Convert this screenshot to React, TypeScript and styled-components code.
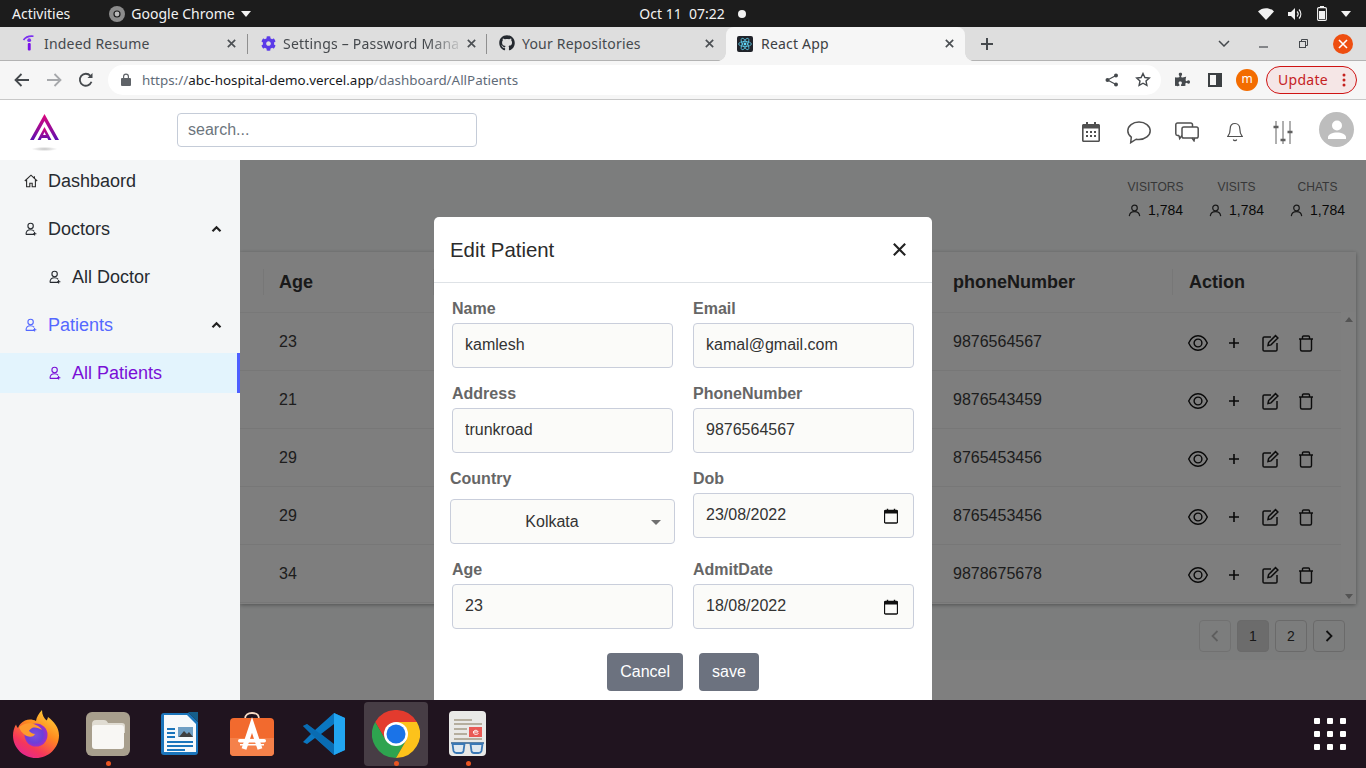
import React from "react";
import styled, { createGlobalStyle } from "styled-components";
import { FaCog, FaGithub, FaPuzzlePiece } from "react-icons/fa";

const Global = createGlobalStyle`
  html, body { margin: 0; padding: 0; height: 768px; overflow: hidden; background: #fff; }
  * { box-sizing: border-box; }
  body { font-family: "Liberation Sans", Arial, sans-serif; }
`;

const ui = `"Noto Sans", "Open Sans", sans-serif`;

const Screen = styled.div`
  width: 1366px;
  height: 768px;
  display: flex;
  flex-direction: column;
  overflow: hidden;
`;

/* GNOME top bar */
const TopBar = styled.div`
  height: 27px;
  background: #1c1c1c;
  color: #f2f2f2;
  font-family: ${ui};
  font-size: 14px;
  display: grid;
  grid-template-columns: 1fr auto 1fr;
  align-items: center;
  padding: 0 12px;
`;
const TopLeft = styled.div`
  display: flex;
  align-items: center;
`;
const AppMenu = styled.div`
  display: flex;
  align-items: center;
  gap: 6px;
  margin-left: 39px;
`;
const TopClock = styled.div`
  display: flex;
  align-items: center;
  gap: 13px;
  padding-left: 19px;
`;
const TopRight = styled.div`
  display: flex;
  justify-content: flex-end;
  align-items: center;
  gap: 14px;
  padding-right: 3px;
`;

/* Tab strip */
const TabStrip = styled.div`
  height: 34px;
  background: #dedede;
  border-bottom: 1px solid #b3b3b3;
  display: flex;
  align-items: flex-start;
  padding-left: 8px;
  font-family: ${ui};
  font-size: 14px;
  letter-spacing: 0.2px;
  color: #45494d;
`;
const Tab = styled.div<{ $active?: boolean; $sep?: boolean }>`
  position: relative;
  width: 239px;
  height: 34px;
  display: flex;
  align-items: center;
  padding: 0 8px 2px 13px;
  gap: 7px;
  ${(p) => p.$active && `
    background: #f6f6f6;
    height: 35px;
    margin-left: 1px;
    padding-left: 11px;
    gap: 8px;
    border-radius: 8px 8px 0 0;
    color: #3c4043;
    z-index: 1;
    &::before, &::after {
      content: "";
      position: absolute;
      bottom: 1px;
      width: 8px;
      height: 8px;
    }
    &::before {
      left: -8px;
      background: radial-gradient(circle at 0 0, transparent 7.5px, #f6f6f6 8px);
    }
    &::after {
      right: -8px;
      background: radial-gradient(circle at 100% 0, transparent 7.5px, #f6f6f6 8px);
    }
  `}
  ${(p) => p.$sep && `
    &::after {
      content: "";
      position: absolute;
      right: -1px;
      top: 7px;
      height: 20px;
      width: 1px;
      background: #8f8f8f;
    }
  `}
`;
const TabTitle = styled.span<{ $fade?: boolean }>`
  white-space: nowrap;
  ${(p) => p.$fade && `
    -webkit-mask-image: linear-gradient(90deg, #000 82%, rgba(0, 0, 0, 0.15) 100%);
    mask-image: linear-gradient(90deg, #000 82%, rgba(0, 0, 0, 0.15) 100%);
  `}
`;
const TabIconBox = styled.span`
  width: 16px;
  height: 16px;
  display: flex;
  align-items: center;
  justify-content: center;
  flex: none;
`;
const TabClose = styled.span`
  display: flex;
  margin: 0 2px 0 auto;
`;
const StripRight = styled.div`
  flex: 1;
  display: flex;
  align-items: center;
  height: 33px;
  position: relative;
`;
const NewTab = styled.span`
  margin-left: 15px;
  display: flex;
`;
const WindowControls = styled.div`
  margin-left: auto;
  display: flex;
  align-items: center;
  padding-right: 3px;
`;
const ControlSlot = styled.span<{ $w: number }>`
  width: ${(p) => p.$w}px;
  display: flex;
  justify-content: center;
  align-items: center;
`;
const CloseCircle = styled.span`
  width: 20px;
  height: 20px;
  border-radius: 50%;
  background: #ee4e10;
  display: flex;
  align-items: center;
  justify-content: center;
`;

/* Chrome toolbar */
const ToolBar = styled.div`
  height: 39px;
  background: #f6f6f6;
  border-bottom: 1px solid #c8c8c8;
  display: flex;
  align-items: center;
  padding: 0 9px 1px 0;
`;
const NavButtons = styled.div`
  display: flex;
  align-items: center;
  width: 108px;
  padding-left: 14px;
  gap: 16px;
`;
const Omnibox = styled.div`
  width: 1053px;
  height: 30px;
  background: #fff;
  border-radius: 15px;
  display: flex;
  align-items: center;
  padding: 0 10px 0 12px;
  font-family: ${ui};
  font-size: 13.4px;
  color: #5f6b78;
`;
const Url = styled.span`
  margin-left: 10px;
  flex: 1;
  white-space: nowrap;
`;
const UrlHost = styled.span`
  color: #16191c;
`;
const OmniIcons = styled.div`
  display: flex;
  align-items: center;
  gap: 16px;
`;
const ToolIcons = styled.div`
  display: flex;
  align-items: center;
  margin-left: 14px;
  gap: 18px;
`;
const ProfileBadge = styled.span`
  width: 22px;
  height: 22px;
  margin-left: 14px;
  border-radius: 50%;
  background: #f36c00;
  color: #fff;
  font-family: ${ui};
  font-size: 12px;
  display: flex;
  align-items: center;
  justify-content: center;
  padding-bottom: 2px;
`;
const UpdatePill = styled.div`
  width: 91px;
  height: 28px;
  margin-left: 8px;
  border: 1px solid #cf1414;
  border-radius: 14px;
  background: #f5e6e6;
  color: #c5221f;
  font-family: ${ui};
  font-size: 14px;
  letter-spacing: 0.3px;
  display: flex;
  align-items: center;
  justify-content: space-between;
  padding: 0 10px 0 11px;
`;

/* App header */
const AppHeader = styled.header`
  height: 60px;
  background: #fff;
  display: flex;
  align-items: center;
`;
const LogoBox = styled.div`
  width: 177px;
  height: 60px;
  display: flex;
  align-items: center;
  padding: 0 0 6px 28px;
`;
const SearchInput = styled.input`
  width: 300px;
  height: 34px;
  border: 1px solid #c5ccd8;
  border-radius: 4px;
  padding: 0 10px 1px;
  font: 16px "Liberation Sans", Arial, sans-serif;
  color: #333;
  &::placeholder { color: #6c757d; opacity: 1; }
`;
const HeaderIcons = styled.div`
  margin-left: auto;
  display: flex;
  align-items: center;
  padding-right: 12px;
`;
const HeaderIcon = styled.span`
  width: 48px;
  margin-top: 4px;
  display: flex;
  justify-content: center;
  align-items: center;
`;
const Avatar = styled.span`
  width: 35px;
  height: 35px;
  margin-left: 12px;
  margin-top: -1px;
  border-radius: 50%;
  background: #bdbdbd;
  display: flex;
  align-items: center;
  justify-content: center;
`;

/* Main */
const Main = styled.div`
  height: 540px;
  display: flex;
  overflow: hidden;
`;
const Sidebar = styled.nav`
  width: 240px;
  flex: none;
  background: #f4f6f7;
  padding-top: 1px;
  display: flex;
  flex-direction: column;
  gap: 8px;
`;
const NavItem = styled.div<{ $tone?: "blue" | "violet"; $sub?: boolean; $selected?: boolean }>`
  height: 40px;
  display: flex;
  align-items: center;
  font-size: 18px;
  color: ${(p) => (p.$tone === "blue" ? "#5468ff" : p.$tone === "violet" ? "#7a0fd6" : "#272b30")};
  padding-left: ${(p) => (p.$sub ? "48px" : "24px")};
  gap: 10px;
  padding-right: 18px;
  ${(p) => p.$selected && `
    background: #e3f4fd;
    border-right: 3px solid #4e5fff;
  `}
`;
const NavLabel = styled.span`
  flex: 1;
`;

const Content = styled.div`
  flex: 1;
  position: relative;
  background: #fff;
  overflow: hidden;
`;
const ContentInner = styled.div`
  height: 500px;
  background: #f9fbfb;
  display: flex;
  flex-direction: column;
`;
const StatsBar = styled.div`
  height: 92px;
  flex: none;
  display: flex;
  justify-content: flex-end;
  gap: 26px;
  padding: 20px 21px 0 0;
`;
const Stat = styled.div`
  width: 55px;
  display: flex;
  flex-direction: column;
  align-items: center;
  gap: 8px;
`;
const StatLabel = styled.span`
  font-size: 12px;
  line-height: 14px;
  color: #6f6f70;
  white-space: nowrap;
`;
const StatValue = styled.span`
  font-size: 14px;
  line-height: 16px;
  color: #111;
  display: flex;
  align-items: center;
  gap: 7px;
  white-space: nowrap;
`;
const TableCard = styled.div`
  margin-right: 10px;
  height: 352px;
  flex: none;
  background: #fff;
  box-shadow: 0 1px 4px rgba(0, 0, 0, 0.35);
  position: relative;
`;
const cols = "23px 170px 1fr 235px 169px";
const HeadRow = styled.div`
  height: 61px;
  display: grid;
  grid-template-columns: ${cols};
  padding-right: 15px;
  align-items: center;
  background: #fcfcfc;
  border-bottom: 1px solid #f0f0f0;
`;
const HeadCell = styled.div<{ $line?: boolean; $pad?: number }>`
  font-size: 18px;
  font-weight: 700;
  color: #333;
  padding-left: ${(p) => p.$pad ?? 16}px;
  height: 26px;
  line-height: 26px;
  ${(p) => p.$line && "border-left: 1px solid #eee;"}
`;
const BodyRows = styled.div`
  display: flex;
  flex-direction: column;
  margin-right: 15px;
`;
const Row = styled.div`
  height: 58px;
  display: grid;
  grid-template-columns: ${cols};
  align-items: center;
  background: #fcfcfc;
  border-bottom: 1px solid #eeeeee;
  font-size: 16px;
  color: #3a3a3a;
`;
const Cell = styled.div`
  padding-left: 16px;
`;
const Actions = styled.div`
  display: flex;
  gap: 16px;
  padding: 3px 0 0 16px;
`;
const ScrollTrack = styled.div`
  position: absolute;
  right: 0;
  top: 60px;
  bottom: 0;
  width: 15px;
  background: #fff;
  display: flex;
  flex-direction: column;
  justify-content: space-between;
  align-items: center;
  padding: 5px 0;
`;
const Pager = styled.div`
  display: flex;
  justify-content: flex-end;
  gap: 6px;
  margin: 16px 21px 0 0;
`;
const PageBtn = styled.div<{ $active?: boolean; $muted?: boolean }>`
  width: 32px;
  height: 32px;
  border: 1px solid ${(p) => (p.$muted ? "#e2e2e2" : "#d4d4d4")};
  border-radius: 4px;
  background: ${(p) => (p.$active ? "#d8d8d8" : "transparent")};
  color: #333;
  font-size: 14px;
  display: flex;
  align-items: center;
  justify-content: center;
`;

/* Overlay + modal */
const Scrim = styled.div`
  position: absolute;
  inset: 0;
  background: rgba(0, 0, 0, 0.5);
`;
const Modal = styled.div`
  position: absolute;
  left: 194px;
  top: 57px;
  width: 498px;
  height: 520px;
  background: #fff;
  border-radius: 5px 5px 0 0;
`;
const ModalHead = styled.div`
  height: 66px;
  border-bottom: 1px solid #dee2e6;
  display: flex;
  align-items: center;
  justify-content: space-between;
  padding: 0 24px 0 16px;
`;
const ModalTitle = styled.h2`
  margin: 0;
  padding-top: 2px;
  font-size: 20.4px;
  font-weight: 400;
  color: #2b2b2b;
`;
const ModalBody = styled.div`
  padding: 16px 18px 0;
`;
const FormGrid = styled.div`
  display: grid;
  grid-template-columns: 221px 221px;
  column-gap: 20px;
  row-gap: 16px;
`;
const Field = styled.label<{ $outset?: boolean }>`
  display: flex;
  flex-direction: column;
  ${(p) => p.$outset && "margin: 0 -2px;"}
`;
const FieldLabel = styled.span<{ $gap?: number }>`
  font-size: 16px;
  line-height: 20px;
  font-weight: 700;
  color: #666;
  margin-bottom: ${(p) => p.$gap ?? 4}px;
`;
const TextInput = styled.input`
  height: 45px;
  width: 100%;
  border: 1px solid #c9cedb;
  border-radius: 4px;
  background: #fbfbf9;
  padding: 0 12px 2px;
  font: 16px "Liberation Sans", Arial, sans-serif;
  color: #333;
`;
const SelectBox = styled.div`
  height: 45px;
  border: 1px solid #c9cedb;
  border-radius: 4px;
  background: #fbfbf9;
  display: flex;
  align-items: center;
  position: relative;
  font-size: 16px;
  color: #333;
`;
const SelectValue = styled.span`
  flex: 1;
  text-align: center;
  padding-right: 21px;
`;
const SelectCaret = styled.span`
  position: absolute;
  right: 13px;
  top: 20px;
  width: 0;
  height: 0;
  border-left: 5px solid transparent;
  border-right: 5px solid transparent;
  border-top: 5px solid #707070;
`;
const DateBox = styled.div`
  height: 45px;
  border: 1px solid #c9cedb;
  border-radius: 4px;
  background: #fbfbf9;
  display: flex;
  align-items: center;
  justify-content: space-between;
  padding: 0 15px 0 12px;
  font-size: 16px;
  color: #333;
`;
const DateText = styled.span`
  padding-bottom: 2px;
`;
const ModalActions = styled.div`
  display: flex;
  justify-content: center;
  gap: 16px;
  margin-top: 24px;
`;
const Button = styled.button`
  height: 38px;
  border: 0;
  border-radius: 4px;
  background: #6c727f;
  color: #fff;
  font: 16px "Liberation Sans", Arial, sans-serif;
  padding: 0 13px;
`;

/* Dock */
const Dock = styled.footer`
  height: 68px;
  background: #20141f;
  display: flex;
  align-items: center;
  position: relative;
`;
const DockSlot = styled.div<{ $on?: boolean; $dot?: boolean }>`
  width: 72px;
  height: 64px;
  display: flex;
  align-items: center;
  justify-content: center;
  position: relative;
  &::before {
    content: "";
    position: absolute;
    left: 4px;
    right: 4px;
    top: 0;
    bottom: 0;
    border-radius: 4px;
    background: ${(p) => (p.$on ? "#473d45" : "transparent")};
  }
  & > svg { position: relative; }
  ${(p) => p.$dot && `
    &::after {
      content: "";
      position: absolute;
      left: 34px;
      bottom: 0;
      width: 5px;
      height: 5px;
      border-radius: 50%;
      background: #e95420;
    }
  `}
`;
const AppGrid = styled.div`
  margin-left: auto;
  margin-right: 20px;
  width: 32px;
  height: 32px;
  display: grid;
  grid-template-columns: repeat(3, 6px);
  justify-content: space-between;
  align-content: space-between;
`;
const AppGridDot = styled.span`
  width: 6px;
  height: 6px;
  border-radius: 1px;
  background: #fff;
`;

/* ---------- icons ---------- */
const UserIcon = ({ c = "currentColor", s = 14, w = 1.3 }: { c?: string; s?: number; w?: number }) => (
  <svg width={s} height={s} viewBox="0 0 14 14" fill="none" stroke={c} strokeWidth={w}>
    <circle cx="7" cy="4.3" r="3" />
    <path d="M1.4 13c.3-3 2.4-4.9 5.6-4.9s5.3 1.9 5.6 4.9" />
  </svg>
);
const NavUser = () => (
  <svg width="14" height="14" viewBox="0 0 14 14" fill="none" stroke="currentColor" strokeWidth="1.1">
    <circle cx="6.6" cy="4" r="2.7" />
    <path d="M2 12.400c0-2.800 1.600-4.600 4.600-4.600 1.600 0 2.800.5 3.600 1.500" />
    <path d="M2 12.400h8M10.600 10v3.400M9 11.700h3.400" />
  </svg>
);
const HomeIcon = () => (
  <svg width="14" height="14" viewBox="0 0 14 14" fill="none" stroke="#2b2b2b" strokeWidth="1.1">
    <path d="M.8 7 7 1.200 13.200 7M2.600 6v6.800h3.200V9.200h2.400v3.600h3.200V6M10.400 2.200v2" />
  </svg>
);
const ChevUp = () => (
  <svg width="11" height="8" viewBox="0 0 11 8" fill="none" stroke="#222" strokeWidth="2.2">
    <path d="M1.500 6.200 5.500 2.200l4 4" />
  </svg>
);
const X = ({ s = 12, c = "#4c5054", w = 1.8 }: { s?: number; c?: string; w?: number }) => (
  <svg width={s} height={s} viewBox="0 0 12 12" stroke={c} strokeWidth={w}>
    <path d="M2 2l8 8M10 2l-8 8" />
  </svg>
);
const IndeedFav = () => (
  <svg width="14" height="16" viewBox="0 0 14 16" fill="none">
    <path d="M1.500 5C3.500 2 7 .7 11.500 1.200" stroke="#7b2ff0" strokeWidth="1.600" />
    <circle cx="7.200" cy="5.200" r="1.900" fill="#7b2ff0" />
    <rect x="5.800" y="8" width="2.900" height="7.600" rx="1" fill="#7b10e8" />
  </svg>
);
const ReactFav = () => (
  <svg width="16" height="16" viewBox="0 0 16 16">
    <rect width="16" height="16" rx="2" fill="#20232a" />
    <g fill="none" stroke="#61dafb" strokeWidth=".7">
      <ellipse cx="8" cy="8" rx="6.400" ry="2.500" />
      <ellipse cx="8" cy="8" rx="6.400" ry="2.500" transform="rotate(60 8 8)" />
      <ellipse cx="8" cy="8" rx="6.400" ry="2.500" transform="rotate(120 8 8)" />
    </g>
    <circle cx="8" cy="8" r="1.400" fill="#61dafb" />
  </svg>
);
const Logo = () => (
  <svg width="34" height="54" viewBox="0 0 34 54" fill="none">
    <defs>
      <linearGradient id="lg" x1="0" y1="0" x2="0" y2="1">
        <stop offset="0" stopColor="#e0067a" />
        <stop offset="1" stopColor="#5e10b0" />
      </linearGradient>
      <radialGradient id="ls">
        <stop offset="0" stopColor="#c4c4c4" />
        <stop offset="1" stopColor="#fff" />
      </radialGradient>
    </defs>
    <path d="M16.500 14 2 40h3.800L16.500 21 27.200 40H31Z" fill="url(#lg)" />
    <path d="M16.500 27 9.500 40h3.200l1-2h5.600l1 2h3.200Zm-1.400 8 1.400-3 1.400 3Z" fill="url(#lg)" />
    <ellipse cx="16.500" cy="49" rx="13" ry="2.200" fill="url(#ls)" />
  </svg>
);
const Calendar = () => (
  <svg width="18" height="20" viewBox="0 0 18 20">
    <path fill="#505050" d="M4 0h2v2h6V0h2v2h2.500C17.300 2 18 2.700 18 3.500v15c0 .8-.7 1.500-1.500 1.500h-15C.7 20 0 19.300 0 18.500v-15C0 2.700.7 2 1.500 2H4Z" />
    <rect x="1.600" y="6.500" width="14.800" height="12" fill="#fff" />
    <g fill="#505050">
      <rect x="4" y="9" width="2" height="2" /><rect x="8" y="9" width="2" height="2" /><rect x="12" y="9" width="2" height="2" />
      <rect x="4" y="13" width="2" height="2" /><rect x="8" y="13" width="2" height="2" /><rect x="12" y="13" width="2" height="2" />
    </g>
  </svg>
);
const ChatBubble = () => (
  <svg width="24" height="23" viewBox="0 0 24 23" fill="none" stroke="#505050" strokeWidth="1.500">
    <path d="M12 1C5.800 1 .8 4.900 .8 9.800c0 2.500 1.300 4.700 3.500 6.300l-.6 5.600 5.500-3.500c.9.200 1.800.3 2.800.3 6.200 0 11.200-3.900 11.200-8.700S18.200 1 12 1Z" />
  </svg>
);
const Chats = () => (
  <svg width="24" height="20" viewBox="0 0 24 20" fill="none" stroke="#505050" strokeWidth="1.500">
    <path d="M4 13.500H2.500A1.700 1.700 0 0 1 .8 11.800V2.700A1.700 1.700 0 0 1 2.500 1h13.300a1.700 1.700 0 0 1 1.700 1.700V5" />
    <path d="M4 13.500l.7 3 2.300-3" />
    <rect x="7" y="5" width="16.200" height="11" rx="1.800" fill="#fff" />
    <path d="M17 16l2 2.800.6-2.800" />
  </svg>
);
const Bell = () => (
  <svg width="16" height="21" viewBox="0 0 16 21" fill="none" stroke="#505050" strokeWidth="1.200">
    <path d="M8 1.500c-3 0-4.800 2.300-4.800 5.300 0 3.700-.9 6-2.400 7.700h14.400c-1.500-1.700-2.400-4-2.400-7.700 0-3-1.800-5.300-4.800-5.300ZM6.300 17.500c.5 1.500 2.900 1.500 3.400 0" />
  </svg>
);
const Sliders = () => (
  <svg width="20" height="23" viewBox="0 0 20 23" fill="none" stroke="#606060">
    <path d="M3 0v23M10 0v23M17 0v23" strokeWidth="1" />
    <path d="M.5 6h5M7.500 19h5M14.500 11h5" strokeWidth="2.400" />
  </svg>
);
const AvatarPerson = () => (
  <svg width="22" height="22" viewBox="0 0 22 22" fill="#fff">
    <circle cx="11" cy="6.500" r="5" />
    <path d="M11 13.500c-4.300 0-9 1.900-9 4.600V20h18v-1.900c0-2.700-4.700-4.600-9-4.600Z" />
  </svg>
);
const Eye = () => (
  <svg width="20" height="20" viewBox="0 0 20 20" fill="none" stroke="#111" strokeWidth="1.400">
    <path d="M.7 10C2.800 5.200 6 2.800 10 2.800s7.200 2.400 9.300 7.200c-2.100 4.800-5.300 7.200-9.300 7.200S2.800 14.800.7 10Z" />
    <circle cx="10" cy="10" r="3.900" />
  </svg>
);
const Plus = () => (
  <svg width="20" height="20" viewBox="0 0 20 20" stroke="#111" strokeWidth="1.600">
    <path d="M5 10h10M10 5v10" />
  </svg>
);
const Edit = () => (
  <svg width="20" height="20" viewBox="0 0 20 20" fill="none" stroke="#1a1a1a" strokeWidth="1.500">
    <path d="M11 4H4.300C3.500 4 3 4.500 3 5.300v11.400c0 .8.500 1.300 1.300 1.300h11.400c.8 0 1.300-.5 1.300-1.300V10" />
    <path d="M8 12.500l.6-3L15.500 2.600l2.400 2.400-6.900 6.900Z" />
  </svg>
);
const Trash = () => (
  <svg width="20" height="20" viewBox="0 0 20 20" fill="none" stroke="#1a1a1a" strokeWidth="1.400">
    <path d="M3 6h14M4.500 6v10.500c0 .8.700 1.500 1.500 1.500h8c.8 0 1.500-.7 1.500-1.500V6M6.500 6V4c0-.6.400-1 1-1h5c.6 0 1 .4 1 1v2" />
  </svg>
);
const DateIcon = () => (
  <svg width="14" height="16" viewBox="0 0 14 16" fill="none">
    <path d="M1.500 2.500h11c.6 0 1 .4 1 1v10.500c0 .6-.4 1-1 1h-11c-.6 0-1-.4-1-1V3.500c0-.6.400-1 1-1Z" stroke="#111" strokeWidth="1.300" />
    <rect x=".5" y="2.500" width="13" height="3" fill="#111" />
    <path d="M3.500 .8v2M10.500 .8v2" stroke="#111" strokeWidth="1.400" />
  </svg>
);
const Chevron = ({ dir, c }: { dir: "l" | "r"; c: string }) => (
  <svg width="10" height="14" viewBox="0 0 10 14" fill="none" stroke={c} strokeWidth="1.800">
    <path d={dir === "l" ? "M7.500 2 2.500 7l5 5" : "M2.500 2l5 5-5 5"} />
  </svg>
);
const Tri = ({ dir }: { dir: "u" | "d" }) => (
  <svg width="8" height="5" viewBox="0 0 8 5" fill="#a8a8a8">
    <path d={dir === "u" ? "M4 0l4 5H0Z" : "M0 0h8L4 5Z"} />
  </svg>
);

/* dock art */
const Firefox = () => (
  <svg width="46" height="48" viewBox="0 0 46 48">
    <defs>
      <linearGradient id="ff1" x1=".8" y1="0" x2=".2" y2="1">
        <stop offset="0" stopColor="#ffd43b" />
        <stop offset=".4" stopColor="#ff8a1f" />
        <stop offset=".75" stopColor="#f5365c" />
        <stop offset="1" stopColor="#e0249a" />
      </linearGradient>
      <radialGradient id="ff2" cx=".45" cy=".5">
        <stop offset="0" stopColor="#7a50e0" />
        <stop offset=".7" stopColor="#6c3fd8" />
        <stop offset="1" stopColor="#9a2fc8" />
      </radialGradient>
    </defs>
    <path fill="url(#ff1)" d="M29 0c0 5 2 8 4.500 10.500.8-1 1.200-2 1.500-3.500 6 4.500 11 10.500 11 18.500C46 38 35.500 48 23 48S0 38 0 25.500c0-4 1-8 3-11 .5 1.500 1 2.500 2 3.500 1-3 3.500-6 7-7.500 4-1.500 8-1 11 .5.500-4 3-8 6-11Z" />
    <circle cx="23" cy="25" r="11.500" fill="url(#ff2)" />
    <path fill="#ff9a2e" d="M6 17c5-4 12-5 17-2 3 1 5 3 6 5-3-2-7-3-10-2-1 1-3 2-3 3 2 2 4 3 6 3-2 4-7 3-10 1-3-2-5-5-6-8Z" />
  </svg>
);
const Files = () => (
  <svg width="44" height="44" viewBox="0 0 44 44">
    <rect width="44" height="44" rx="6" fill="#a89f8d" />
    <path d="M6 12c0-2 1-4 4-4h8c2 0 3 1 4 3h14c2 0 3 1 3 3v7H6Z" fill="#e0dcd2" />
    <rect x="6" y="13" width="32" height="24" rx="3" fill="#f8f7f4" />
  </svg>
);
const Writer = () => (
  <svg width="38" height="44" viewBox="0 0 38 44">
    <path d="M3 1h25l9 9v30a3 3 0 0 1-3 3H3a3 3 0 0 1-3-3V4a3 3 0 0 1 3-3Z" fill="#1b75bb" />
    <path d="M3 3h23l9 9v28H3Z" fill="#f6f9fb" />
    <path d="M27 0h10v10Z" fill="#155e8a" />
    <g fill="#1b75bb">
      <rect x="6" y="16" width="8" height="2" /><rect x="6" y="20" width="8" height="2" />
      <rect x="6" y="24" width="8" height="2" /><rect x="6" y="29" width="26" height="2" />
      <rect x="6" y="33" width="26" height="2" /><rect x="6" y="37" width="18" height="2" />
    </g>
    <rect x="17" y="15" width="15" height="10" fill="#6f9fc4" />
    <path d="M18 25l5-6 3 3 2-2 4 5Z" fill="#3f3f3f" />
  </svg>
);
const Store = () => (
  <svg width="44" height="44" viewBox="0 0 44 44">
    <path d="M15 7c0-4 3-6 7-6s7 2 7 6" fill="none" stroke="#f7dcc6" strokeWidth="1.800" />
    <rect y="6" width="44" height="38" rx="4" fill="#f26a2e" />
    <path d="M0 26h44v14a4 4 0 0 1-4 4H4a4 4 0 0 1-4-4Z" fill="#f5814a" />
    <path d="M14 37 22 13l8 24" fill="none" stroke="#fff" strokeWidth="5" />
    <rect x="8" y="27" width="28" height="3.500" rx="1.750" fill="#fff" />
    <rect x="10" y="32" width="24" height="1.500" fill="#fff" />
  </svg>
);
const VSCode = () => (
  <svg width="42" height="44" viewBox="0 0 42 44">
    <path d="M31 1 12 18 4 12 0 14l8 8-8 8 4 2 8-6 19 17 11-5V6Z" fill="#0a77c2" />
    <path d="M31 1l11 5v32l-11 5Z" fill="#22a5f1" />
    <path d="M4 12l27 20v11L0 14Z" fill="#0a65a8" opacity=".55" />
    <path d="M31 12 18 22l13 10Z" fill="#20141f" />
  </svg>
);
const Chrome = () => (
  <svg width="48" height="48" viewBox="0 0 48 48">
    <path d="M24 12H44.800A24 24 0 0 0 3.200 12L13.600 30Z" fill="#e33b2e" />
    <path d="M3.200 12A24 24 0 0 0 24 48L34.400 30H13.600Z" fill="#2ea44f" />
    <path d="M44.800 12H24L34.400 30 24 48A24 24 0 0 0 44.800 12Z" fill="#fcc21b" />
    <circle cx="24" cy="24" r="12" fill="#fff" />
    <circle cx="24" cy="24" r="9.500" fill="#1a73e8" />
  </svg>
);
const Reader = () => (
  <svg width="38" height="46" viewBox="0 0 38 46">
    <rect width="37" height="45" rx="4" fill="#e9e9e7" />
    <g fill="#b5ae9e">
      <rect x="5" y="8" width="18" height="2" /><rect x="5" y="12" width="28" height="2" />
      <rect x="5" y="17" width="13" height="2" /><rect x="5" y="22" width="13" height="2" />
      <rect x="5" y="27" width="28" height="2" />
    </g>
    <rect x="20" y="16" width="13" height="10" fill="#e95a55" />
    <path d="M24 21h5c0-2-4-2.500-4.500 0s3 3 5 1.500" fill="none" stroke="#fff" strokeWidth="1" />
    <path d="M2 32h33" stroke="#2d5e8e" strokeWidth="1.500" />
    <path d="M3.500 33h12l-1 7c-.3 1.500-1 2-2.500 2H7.500c-1.500 0-2.500-.5-3-2ZM21.500 33h12l-1 7c-.5 1.500-1.500 2-3 2H25c-1.500 0-2.200-.5-2.500-2Z" fill="#dfe8ef" stroke="#3a78b5" strokeWidth="1.800" />
  </svg>
);

const rows: [string, string][] = [
  ["23", "9876564567"],
  ["21", "9876543459"],
  ["29", "8765453456"],
  ["29", "8765453456"],
  ["34", "9878675678"],
];
const stats = ["VISITORS", "VISITS", "CHATS"];

export default function App() {
  return (
    <>
      <Global />
      <Screen>
        <TopBar>
          <TopLeft>
            Activities
            <AppMenu>
              <svg width="16" height="16" viewBox="0 0 16 16">
                <circle cx="8" cy="8" r="8" fill="#8c8c8c" />
                <circle cx="8" cy="8" r="3.600" fill="#1c1c1c" />
                <circle cx="8" cy="8" r="2.400" fill="#bbb" />
              </svg>
              Google Chrome
              <svg width="10" height="6" viewBox="0 0 10 6" fill="#f2f2f2"><path d="M0 0h10L5 6Z" /></svg>
            </AppMenu>
          </TopLeft>
          <TopClock>
            Oct 11&nbsp; 07:22
            <svg width="8" height="8" viewBox="0 0 8 8" fill="#f2f2f2"><circle cx="4" cy="4" r="4" /></svg>
          </TopClock>
          <TopRight>
            <svg width="16" height="12" viewBox="0 0 16 12" fill="#f2f2f2"><path d="M0 3.500C4-1 12-1 16 3.500L8 12Z" /></svg>
            <svg width="15" height="12" viewBox="0 0 15 12" fill="#f2f2f2">
              <path d="M0 4h3l4-4v12L3 8H0Z" />
              <path d="M9 3.500c1.500 1.500 1.500 3.500 0 5M11 1.500c2.500 2.500 2.500 6.500 0 9" fill="none" stroke="#f2f2f2" strokeWidth="1.100" />
            </svg>
            <svg width="10" height="15" viewBox="0 0 10 15" fill="none">
              <rect x=".6" y="1.600" width="8.800" height="12.800" rx="1.200" stroke="#f2f2f2" strokeWidth="1.100" />
              <rect x="3" y="0" width="4" height="2" fill="#f2f2f2" />
              <rect x="2" y="5" width="6" height="8" fill="#f2f2f2" />
            </svg>
            <svg width="10" height="6" viewBox="0 0 10 6" fill="#f2f2f2"><path d="M0 0h10L5 6Z" /></svg>
          </TopRight>
        </TopBar>

        <TabStrip>
          <Tab $sep>
            <TabIconBox><IndeedFav /></TabIconBox>
            <TabTitle>Indeed Resume</TabTitle>
            <TabClose><X s={11} /></TabClose>
          </Tab>
          <Tab $sep>
            <TabIconBox><FaCog size={15} color="#5b3be8" /></TabIconBox>
            <TabTitle $fade>Settings – Password Mana</TabTitle>
            <TabClose><X s={11} /></TabClose>
          </Tab>
          <Tab>
            <TabIconBox><FaGithub size={16} color="#24292f" /></TabIconBox>
            <TabTitle>Your Repositories</TabTitle>
            <TabClose><X s={11} /></TabClose>
          </Tab>
          <Tab $active>
            <TabIconBox><ReactFav /></TabIconBox>
            <TabTitle>React App</TabTitle>
            <TabClose><X s={11} /></TabClose>
          </Tab>
          <StripRight>
            <NewTab>
              <svg width="14" height="14" viewBox="0 0 14 14" stroke="#45494d" strokeWidth="2"><path d="M1 7h12M7 1v12" /></svg>
            </NewTab>
            <WindowControls>
              <ControlSlot $w={39}>
                <svg width="12" height="7" viewBox="0 0 12 7" fill="none" stroke="#45494d" strokeWidth="1.500"><path d="M1 1l5 5 5-5" /></svg>
              </ControlSlot>
              <ControlSlot $w={40}>
                <svg width="9" height="9" viewBox="0 0 9 9" stroke="#45494d" strokeWidth="1.200"><path d="M0 8h9" /></svg>
              </ControlSlot>
              <ControlSlot $w={40}>
                <svg width="9" height="9" viewBox="0 0 9 9" fill="none" stroke="#45494d"><rect x=".5" y="2.500" width="6" height="6" /><path d="M2.500 2.500V.5h6v6h-2" /></svg>
              </ControlSlot>
              <ControlSlot $w={40}>
                <CloseCircle><X s={12} c="#fff" w={1.600} /></CloseCircle>
              </ControlSlot>
            </WindowControls>
          </StripRight>
        </TabStrip>

        <ToolBar>
          <NavButtons>
            <svg width="16" height="14" viewBox="0 0 16 14" fill="none" stroke="#45494d" strokeWidth="1.800"><path d="M15 7H2M7.500 1 1.500 7l6 6" /></svg>
            <svg width="16" height="14" viewBox="0 0 16 14" fill="none" stroke="#a6a8ab" strokeWidth="1.800"><path d="M1 7h13M8.500 1l6 6-6 6" /></svg>
            <svg width="16" height="16" viewBox="0 0 16 16" fill="none" stroke="#45494d" strokeWidth="1.800">
              <path d="M13.500 9.800A6 6 0 1 1 12.400 3.800" />
              <path d="M14.500 1v5h-5Z" fill="#45494d" stroke="none" />
            </svg>
          </NavButtons>
          <Omnibox>
            <svg width="12" height="13" viewBox="0 0 12 13" fill="#5f6368">
              <path d="M2 5h1V3.500a3 3 0 0 1 6 0V5h1a1 1 0 0 1 1 1v6a1 1 0 0 1-1 1H2a1 1 0 0 1-1-1V6a1 1 0 0 1 1-1Zm2.200 0h3.600V3.500a1.800 1.800 0 0 0-3.600 0Z" />
            </svg>
            <Url>https://<UrlHost>abc-hospital-demo.vercel.app</UrlHost>/dashboard/AllPatients</Url>
            <OmniIcons>
              <svg width="14" height="14" viewBox="0 0 14 14" fill="#45494d" stroke="#45494d">
                <circle cx="11" cy="2.500" r="2" stroke="none" /><circle cx="11" cy="11.500" r="2" stroke="none" /><circle cx="2.500" cy="7" r="2" stroke="none" />
                <path d="M11 2.500 2.500 7l8.500 4.500" fill="none" strokeWidth="1.200" />
              </svg>
              <svg width="16" height="15" viewBox="0 0 16 15" fill="none" stroke="#45494d" strokeWidth="1.400">
                <path d="M8 1.500l1.900 4 4.400.5-3.300 3 .9 4.300L8 11.200l-3.900 2.100.9-4.300-3.300-3 4.400-.5Z" />
              </svg>
            </OmniIcons>
          </Omnibox>
          <ToolIcons>
            <FaPuzzlePiece size={15} color="#45494d" />
            <svg width="14" height="14" viewBox="0 0 14 14" fill="none">
              <rect x="1" y="1" width="12" height="12" stroke="#3c4043" strokeWidth="2" />
              <rect x="8" y="1" width="5" height="12" fill="#3c4043" />
            </svg>
          </ToolIcons>
          <ProfileBadge>m</ProfileBadge>
          <UpdatePill>
            Update
            <svg width="4" height="14" viewBox="0 0 4 14" fill="#c5221f">
              <circle cx="2" cy="2" r="1.500" /><circle cx="2" cy="7" r="1.500" /><circle cx="2" cy="12" r="1.500" />
            </svg>
          </UpdatePill>
        </ToolBar>

        <AppHeader>
          <LogoBox><Logo /></LogoBox>
          <SearchInput placeholder="search..." readOnly />
          <HeaderIcons>
            <HeaderIcon><Calendar /></HeaderIcon>
            <HeaderIcon><ChatBubble /></HeaderIcon>
            <HeaderIcon><Chats /></HeaderIcon>
            <HeaderIcon><Bell /></HeaderIcon>
            <HeaderIcon><Sliders /></HeaderIcon>
            <Avatar><AvatarPerson /></Avatar>
          </HeaderIcons>
        </AppHeader>

        <Main>
          <Sidebar>
            <NavItem><HomeIcon /><NavLabel>Dashbaord</NavLabel></NavItem>
            <NavItem><NavUser /><NavLabel>Doctors</NavLabel><ChevUp /></NavItem>
            <NavItem $sub><NavUser /><NavLabel>All Doctor</NavLabel></NavItem>
            <NavItem $tone="blue"><NavUser /><NavLabel>Patients</NavLabel><ChevUp /></NavItem>
            <NavItem $sub $selected $tone="violet"><NavUser /><NavLabel>All Patients</NavLabel></NavItem>
          </Sidebar>
          <Content>
            <ContentInner>
              <StatsBar>
                {stats.map((s) => (
                  <Stat key={s}>
                    <StatLabel>{s}</StatLabel>
                    <StatValue><UserIcon c="#333" s={13} />1,784</StatValue>
                  </Stat>
                ))}
              </StatsBar>
              <TableCard>
                <HeadRow>
                  <div />
                  <HeadCell $line $pad={15}>Age</HeadCell>
                  <HeadCell $line />
                  <HeadCell>phoneNumber</HeadCell>
                  <HeadCell $line>Action</HeadCell>
                </HeadRow>
                <BodyRows>
                  {rows.map(([age, phone], i) => (
                    <Row key={i}>
                      <div />
                      <Cell>{age}</Cell>
                      <div />
                      <Cell>{phone}</Cell>
                      <Actions><Eye /><Plus /><Edit /><Trash /></Actions>
                    </Row>
                  ))}
                </BodyRows>
                <ScrollTrack><Tri dir="u" /><Tri dir="d" /></ScrollTrack>
              </TableCard>
              <Pager>
                <PageBtn $muted><Chevron dir="l" c="#bdbdbd" /></PageBtn>
                <PageBtn $active>1</PageBtn>
                <PageBtn>2</PageBtn>
                <PageBtn><Chevron dir="r" c="#222" /></PageBtn>
              </Pager>
            </ContentInner>
            <Scrim>
              <Modal>
                <ModalHead>
                  <ModalTitle>Edit Patient</ModalTitle>
                  <X s={17} c="#222" w={1.500} />
                </ModalHead>
                <ModalBody>
                  <FormGrid>
                    <Field><FieldLabel>Name</FieldLabel><TextInput readOnly value="kamlesh" /></Field>
                    <Field><FieldLabel>Email</FieldLabel><TextInput readOnly value="kamal@gmail.com" /></Field>
                    <Field><FieldLabel>Address</FieldLabel><TextInput readOnly value="trunkroad" /></Field>
                    <Field><FieldLabel>PhoneNumber</FieldLabel><TextInput readOnly value="9876564567" /></Field>
                    <Field $outset>
                      <FieldLabel $gap={10}>Country</FieldLabel>
                      <SelectBox><SelectValue>Kolkata</SelectValue><SelectCaret /></SelectBox>
                    </Field>
                    <Field>
                      <FieldLabel>Dob</FieldLabel>
                      <DateBox><DateText>23/08/2022</DateText><DateIcon /></DateBox>
                    </Field>
                    <Field><FieldLabel>Age</FieldLabel><TextInput readOnly value="23" /></Field>
                    <Field>
                      <FieldLabel>AdmitDate</FieldLabel>
                      <DateBox><DateText>18/08/2022</DateText><DateIcon /></DateBox>
                    </Field>
                  </FormGrid>
                  <ModalActions>
                    <Button>Cancel</Button>
                    <Button>save</Button>
                  </ModalActions>
                </ModalBody>
              </Modal>
            </Scrim>
          </Content>
        </Main>

        <Dock>
          <DockSlot><Firefox /></DockSlot>
          <DockSlot $dot><Files /></DockSlot>
          <DockSlot><Writer /></DockSlot>
          <DockSlot><Store /></DockSlot>
          <DockSlot><VSCode /></DockSlot>
          <DockSlot $on $dot><Chrome /></DockSlot>
          <DockSlot $dot><Reader /></DockSlot>
          <AppGrid>
            {Array.from({ length: 9 }).map((_, i) => <AppGridDot key={i} />)}
          </AppGrid>
        </Dock>
      </Screen>
    </>
  );
}
